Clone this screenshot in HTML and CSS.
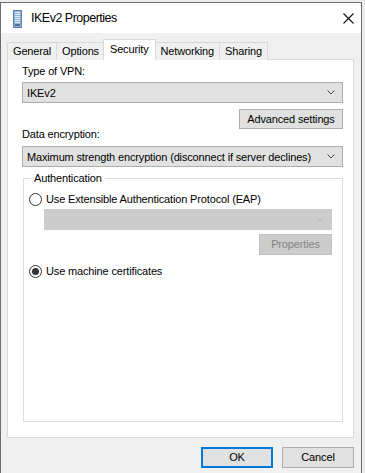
FILE: index.html
```html
<!DOCTYPE html>
<html>
<head>
    <meta name="viewport" content="width=device-width, initial-scale=1.0">
    <title>IKEv2 Properties</title>
    <link rel="stylesheet" href="styles.css">
</head>
<body>
    <div class="window">
        <div class="titlebar">
            <svg class="app-icon" width="9" height="18" viewBox="0 0 9 18">
                <rect x="0.5" y="0.5" width="8" height="17" fill="#8fb0d6" stroke="#5d7fa8"/>
                <rect x="2" y="2" width="5" height="1" fill="#e8f0fa"/>
                <rect x="2" y="4" width="5" height="1" fill="#e8f0fa"/>
                <rect x="2" y="6" width="5" height="1" fill="#e8f0fa"/>
                <rect x="2" y="8" width="5" height="1" fill="#e8f0fa"/>
                <rect x="2" y="10" width="5" height="1" fill="#e8f0fa"/>
                <rect x="2" y="12" width="5" height="1" fill="#e8f0fa"/>
                <rect x="2" y="14" width="5" height="2" fill="#4f6f99"/>
            </svg>
            <span class="title">IKEv2 Properties</span>
            <svg class="close" width="11" height="11" viewBox="0 0 11 11">
                <path d="M0.5 0.5 L10.5 10.5 M10.5 0.5 L0.5 10.5" stroke="#111" stroke-width="1.1"/>
            </svg>
        </div>

        <div class="body">
            <div class="tabs">
                <div class="tab">General</div>
                <div class="tab">Options</div>
                <div class="tab active">Security</div>
                <div class="tab">Networking</div>
                <div class="tab">Sharing</div>
            </div>

            <div class="panel">
                <div class="label">Type of VPN:</div>
                <div class="combo">
                    <span>IKEv2</span>
                    <svg class="chev" width="8" height="5" viewBox="0 0 8 5"><path d="M0.5 0.5 L4 4 L7.5 0.5" fill="none" stroke="#444"/></svg>
                </div>
                <div class="btn-row">
                    <div class="btn btn-adv">Advanced settings</div>
                </div>
                <div class="label label-enc">Data encryption:</div>
                <div class="combo">
                    <span>Maximum strength encryption (disconnect if server declines)</span>
                    <svg class="chev" width="8" height="5" viewBox="0 0 8 5"><path d="M0.5 0.5 L4 4 L7.5 0.5" fill="none" stroke="#444"/></svg>
                </div>

                <div class="group">
                    <div class="group-title">Authentication</div>
                    <div class="radio-row">
                        <span class="radio"></span>
                        <span>Use Extensible Authentication Protocol (EAP)</span>
                    </div>
                    <div class="sub">
                        <div class="combo disabled">
                            <span></span>
                            <svg class="chev" width="8" height="5" viewBox="0 0 8 5"><path d="M0.5 0.5 L4 4 L7.5 0.5" fill="none" stroke="#b0b0b0"/></svg>
                        </div>
                        <div class="btn-row btn-row-props">
                            <div class="btn disabled">Properties</div>
                        </div>
                    </div>
                    <div class="radio-row radio-cert">
                        <span class="radio checked"></span>
                        <span>Use machine certificates</span>
                    </div>
                </div>
            </div>

            <div class="footer">
                <div class="btn btn-ok">OK</div>
                <div class="btn btn-foot">Cancel</div>
            </div>
        </div>
    </div>
</body>
</html>
```

FILE: styles.css
```css
body {
    margin: 0;
    background: #ececec;
    font-family: "Liberation Sans", Arial, sans-serif;
    font-size: 11px;
    letter-spacing: -0.15px;
    color: #000;
    overflow: hidden;
}

.window {
    width: 360px;
    height: 471px;
    margin-top: 2px;
    border: 1px solid #6d6d6d;
    border-bottom: none;
    background: #f0f0f0;
}

.titlebar {
    height: 30px;
    background: #fff;
    display: flex;
    align-items: center;
    padding-left: 12px;
    padding-right: 7px;
}

.app-icon {
    margin-top: 1px;
}

.title {
    font-size: 12.5px;
    letter-spacing: -0.5px;
    margin-left: 9px;
    flex: 1;
}

.close {
    margin-top: 1px;
}

.body {
    padding: 7px 7px 0 6px;
}

.tabs {
    display: flex;
    align-items: flex-end;
    height: 20px;
    position: relative;
    z-index: 1;
    margin-bottom: -1px;
}

.tab {
    height: 17px;
    line-height: 17px;
    padding: 0 5px;
    border: 1px solid #d9d9d9;
    border-bottom: none;
    margin-right: -1px;
    background: #f0f0f0;
}

.tab.active {
    height: 20px;
    line-height: 18px;
    background: #fff;
    margin-left: -1px;
    margin-right: -1px;
    padding: 0 6px;
}

.panel {
    height: 373px;
    border: 1px solid #d9d9d9;
    background: #fff;
    padding: 4px 10px 0 14px;
}

.label {
    height: 18px;
    line-height: 15px;
}

.label-enc {
    margin-top: -2px;
    height: 19px;
}

.combo {
    height: 19px;
    border: 1px solid #adadad;
    background: #e1e1e1;
    display: flex;
    align-items: center;
    justify-content: space-between;
    padding: 0 7px 0 4px;
    white-space: nowrap;
}

.combo.disabled {
    background: #cccccc;
    border-color: #cccccc;
}

.btn-row {
    display: flex;
    justify-content: flex-end;
    margin-top: 6px;
}

.btn {
    height: 19px;
    line-height: 19px;
    border: 1px solid #adadad;
    background: #e1e1e1;
    padding: 0 6px;
    text-align: center;
}

.btn-adv {
    width: 90px;
    height: 18px;
    line-height: 18px;
}

.btn-row-props {
    margin-top: 4px;
}

.btn.disabled {
    border-color: #bfbfbf;
    background: #cccccc;
    color: #838383;
    width: 59px;
}

.group {
    margin-top: 11px;
    margin-left: 1px;
    height: 242px;
    border: 1px solid #dcdcdc;
    padding: 0 10px 0 5px;
}

.group-title {
    width: fit-content;
    background: #fff;
    padding: 0 3px;
    margin-top: -8px;
    margin-left: 2px;
    line-height: 15px;
    height: 15px;
}

.radio-row {
    display: flex;
    align-items: center;
    height: 16px;
    gap: 4px;
    margin-top: 5px;
}

.radio {
    width: 11px;
    height: 11px;
    border: 1px solid #333;
    border-radius: 50%;
    position: relative;
    background: #fff;
}

.radio.checked::after {
    content: "";
    position: absolute;
    left: 2px;
    top: 2px;
    width: 7px;
    height: 7px;
    border-radius: 50%;
    background: #333;
}

.sub {
    padding-left: 15px;
    margin-top: 2px;
}

.radio-cert {
    margin-top: 8px;
}

.footer {
    display: flex;
    justify-content: flex-end;
    gap: 9px;
    margin-top: 9px;
}

.btn-foot {
    width: 70px;
    padding: 0;
}

.btn-ok {
    width: 68px;
    padding: 0;
    border: 2px solid #0078d7;
    height: 17px;
    line-height: 17px;
}
```
